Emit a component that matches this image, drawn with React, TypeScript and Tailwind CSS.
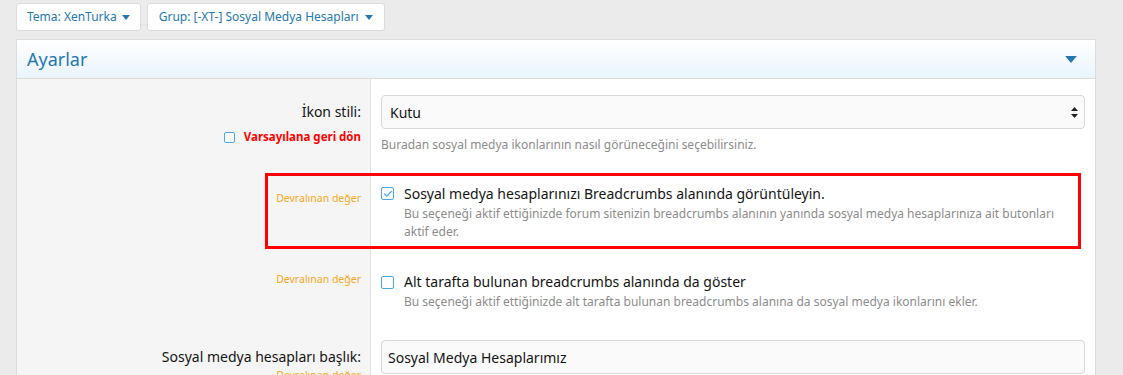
import { Check } from 'lucide-react'

const font = { fontFamily: '"Noto Sans", "Open Sans", sans-serif' }

function Caret({ className = '' }: { className?: string }) {
  return (
    <svg className={className} viewBox="0 0 10 6" fill="currentColor">
      <path d="M0 0h10L5 6z" />
    </svg>
  )
}

function Checkbox({
  checked = false,
  size = 'md',
  className = '',
}: {
  checked?: boolean
  size?: 'sm' | 'md'
  className?: string
}) {
  const dims = size === 'sm' ? 'w-[11px] h-[11px]' : 'w-[13px] h-[13px]'
  return (
    <span
      className={`${dims} flex items-center justify-center flex-shrink-0 border border-[#4aa8ea] rounded-[2px] bg-white ${className}`}
    >
      {checked && <Check className="w-[10px] h-[10px] text-[#4aa8ea]" strokeWidth={3} />}
    </span>
  )
}

function Inherited() {
  return <span className="text-[10.5px] leading-[16px] text-[#f9a825]">Devralınan değer</span>
}

// pad is applied to both columns so the grey label column stays continuous
function Row({
  label,
  children,
  pad,
}: {
  label: React.ReactNode
  children: React.ReactNode
  pad: string
}) {
  return (
    <div className="flex">
      <div className={`w-[354px] flex-shrink-0 bg-[#f5f5f5] border-r border-[#e0e0e0] pr-[9px] flex flex-col items-end ${pad}`}>
        {label}
      </div>
      <div className={`flex-1 pl-[10px] pr-[10px] ${pad}`}>{children}</div>
    </div>
  )
}

export default function App() {
  return (
    <div className="relative h-[375px] overflow-hidden bg-[#ebebeb] pl-[16px] pt-[3px]" style={font}>
      {/* Top buttons */}
      <div className="flex gap-[6px]">
        <button className="h-[28px] px-[10px] flex items-center gap-[5px] bg-white border border-[#dcdcdc] rounded-[3px] text-[12px] text-[#2577b1]">
          Tema: XenTurka
          <Caret className="w-[8px] h-[5px]" />
        </button>
        <button className="h-[28px] px-[11px] flex items-center gap-[6px] bg-white border border-[#dcdcdc] rounded-[3px] text-[12px] text-[#2577b1]">
          Grup: [-XT-] Sosyal Medya Hesapları
          <Caret className="w-[8px] h-[5px]" />
        </button>
      </div>

      {/* Panel */}
      <div className="mt-[8px] w-[1080px] bg-white border border-[#dcdcdc]">
        <div className="h-[39px] flex items-center justify-between px-[10px] bg-gradient-to-b from-white to-[#eaf4fd] border-b border-[#dcdcdc]">
          <span className="text-[18px] text-[#2577b1]">Ayarlar</span>
          <Caret className="w-[12px] h-[7px] text-[#2577b1] mr-[8px]" />
        </div>

        {/* İkon stili */}
        <Row
          pad="pt-[16px] pb-[19px]"
          label={
            <>
              <span className="mt-[7px] text-[14px] leading-[20px] text-[#141414]">İkon stili:</span>
              <span className="mt-[7px] flex items-center gap-[9px] text-[11.5px] leading-[16px] font-bold text-[#ff0000]">
                <Checkbox size="sm" />
                Varsayılana geri dön
              </span>
            </>
          }
        >
          <div className="h-[34px] rounded-[4px] border border-[#d8d8d8] bg-[#fafafa] flex items-center justify-between pl-[8px] pr-[6px]">
            <span className="text-[14px] text-[#141414]">Kutu</span>
            <svg className="w-[7px] h-[11px]" viewBox="0 0 7 11" fill="#222">
              <path d="M3.5 0L7 4H0z" />
              <path d="M0 7h7L3.5 11z" />
            </svg>
          </div>
          <p className="mt-[7px] text-[12px] leading-[18px] text-[#8c8c8c]">
            Buradan sosyal medya ikonlarının nasıl görüneceğini seçebilirsiniz.
          </p>
        </Row>

        {/* Breadcrumbs */}
        <Row pad="pt-[10px] pb-[20px]" label={<div className="mt-[1px]"><Inherited /></div>}>
          <div className="flex items-start gap-[10px]">
            <Checkbox checked className="mt-[4px]" />
            <div>
              <p className="text-[14px] leading-[22px] text-[#141414]">
                Sosyal medya hesaplarınızı Breadcrumbs alanında görüntüleyin.
              </p>
              <p className="text-[12px] leading-[18px] text-[#8c8c8c] pr-[8px]">
                Bu seçeneği aktif ettiğinizde forum sitenizin breadcrumbs alanının yanında sosyal medya hesaplarınıza ait butonları aktif eder.
              </p>
            </div>
          </div>
        </Row>

        {/* Alt breadcrumbs */}
        <Row pad="pt-[10px] pb-[29px]" label={<Inherited />}>
          <div className="flex items-start gap-[10px]">
            <Checkbox className="mt-[5px]" />
            <div>
              <p className="text-[14px] leading-[22px] text-[#141414]">Alt tarafta bulunan breadcrumbs alanında da göster</p>
              <p className="text-[12px] leading-[18px] text-[#8c8c8c]">
                Bu seçeneği aktif ettiğinizde alt tarafta bulunan breadcrumbs alanına da sosyal medya ikonlarını ekler.
              </p>
            </div>
          </div>
        </Row>

        {/* Başlık */}
        <Row
          pad="pb-[20px]"
          label={
            <>
              <span className="mt-[7px] text-[14px] leading-[20px] text-[#141414]">Sosyal medya hesapları başlık:</span>
              <Inherited />
            </>
          }
        >
          <div className="h-[34px] rounded-[4px] border border-[#d8d8d8] bg-[#fafafa] flex items-center pl-[6px]">
            <span className="text-[14px] text-[#141414]">Sosyal Medya Hesaplarımız</span>
          </div>
        </Row>
      </div>

      {/* Annotation box */}
      <div className="absolute left-[265px] top-[173px] w-[816px] h-[76px] border-[3px] border-[#ff0000] pointer-events-none" />
    </div>
  )
}
